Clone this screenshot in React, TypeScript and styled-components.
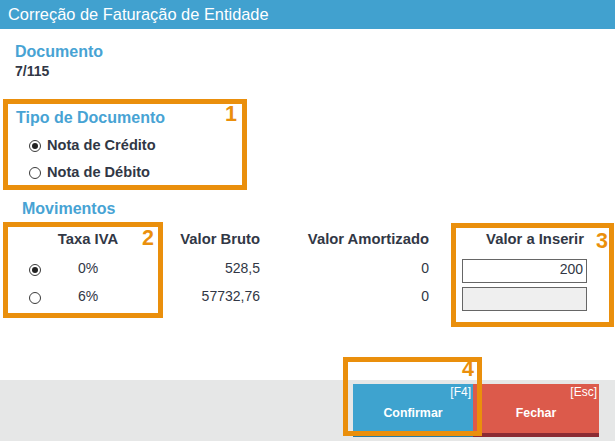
import React from "react";
import styled, { createGlobalStyle } from "styled-components";

const GlobalStyle = createGlobalStyle`
  html, body { margin: 0; padding: 0; background: #ffffff; }
  body { font-family: "Liberation Sans", Arial, sans-serif; }
  * { box-sizing: border-box; }
`;

const ORANGE = "#ea8f0c";
const BLUE = "#41a1cf";
const LABEL = "#47a3d4";
const TEXT = "#313745";

const Page = styled.div`
  position: relative;
  width: 615px;
  height: 441px;
  display: flex;
  flex-direction: column;
  overflow: hidden;
  color: ${TEXT};
`;

const TitleBar = styled.div`
  height: 29px;
  flex: none;
  background: ${BLUE};
  color: #ffffff;
  font-size: 16.4px;
  line-height: 29px;
  padding-left: 8px;
  white-space: nowrap;
`;

const Content = styled.div`
  flex: 1;
  display: flex;
  flex-direction: column;
  padding-top: 13px;
`;

const SectionLabel = styled.div<{ $indent: number; $gap?: number }>`
  font-size: 16px;
  font-weight: bold;
  color: ${LABEL};
  line-height: 20px;
  padding-left: ${(p) => p.$indent}px;
  margin-top: ${(p) => p.$gap ?? 0}px;
`;

const DocValue = styled.div`
  font-size: 14px;
  font-weight: bold;
  line-height: 18px;
  padding-left: 15px;
`;

const OptionList = styled.div`
  display: flex;
  flex-direction: column;
  margin-top: 3px;
  padding-left: 29px;
`;

const Option = styled.label`
  display: flex;
  align-items: center;
  gap: 6px;
  height: 27px;
  font-size: 14.6px;
  font-weight: bold;
`;

const Radio = styled.span<{ $checked?: boolean }>`
  position: relative;
  flex: none;
  width: 12px;
  height: 12px;
  margin-top: 3px;
  border-radius: 50%;
  border: 1px solid #3a3a3a;
  background: #ffffff;
  &::after {
    content: "";
    display: ${(p) => (p.$checked ? "block" : "none")};
    position: absolute;
    left: 2px;
    top: 2px;
    width: 6px;
    height: 6px;
    border-radius: 50%;
    background: #222222;
  }
`;

const Table = styled.div`
  display: grid;
  grid-template-columns: 28px 76px 134px 169px 33px 125px;
  grid-auto-rows: 28px;
  margin-top: 10px;
  margin-left: 22px;
`;

const HeadCell = styled.div<{ $align: "left" | "center" | "right"; $pad?: number }>`
  font-size: 14.8px;
  font-weight: bold;
  line-height: 20px;
  padding-bottom: 8px;
  text-align: ${(p) => p.$align};
  padding-right: ${(p) => p.$pad ?? 0}px;
  white-space: nowrap;
`;

const Cell = styled.div<{ $align: "left" | "center" | "right" }>`
  font-size: 14px;
  line-height: 23px;
  padding-bottom: 5px;
  text-align: ${(p) => p.$align};
  white-space: nowrap;
`;

const RadioCell = styled.div`
  display: flex;
  align-items: center;
  padding-left: 7px;
  padding-bottom: 6px;
`;

const ValueInput = styled.input<{ $disabled?: boolean }>`
  width: 125px;
  height: 24px;
  margin-top: 2px;
  border: 1px solid #666666;
  border-radius: 0;
  background: ${(p) => (p.$disabled ? "#efefef" : "#ffffff")};
  font-family: "Liberation Sans", Arial, sans-serif;
  font-size: 14px;
  color: ${TEXT};
  text-align: right;
  padding: 0 3px 5px 3px;
  outline: none;
`;

const Footer = styled.div`
  flex: none;
  height: 61px;
  background: #e6e7e7;
  display: flex;
  justify-content: flex-end;
  align-items: flex-start;
  padding: 4px 16px 0 0;
`;

const ActionButton = styled.button<{ $bg: string; $edge: string; $w: number }>`
  position: relative;
  width: ${(p) => p.$w}px;
  height: 53px;
  border: none;
  border-bottom: 4px solid ${(p) => p.$edge};
  background: ${(p) => p.$bg};
  color: #ffffff;
  font-family: "Liberation Sans", Arial, sans-serif;
  font-size: 12.4px;
  font-weight: bold;
  padding: 9px 0 0 0;
  cursor: pointer;
`;

const Shortcut = styled.span`
  position: absolute;
  top: 1px;
  right: 2px;
  font-size: 12px;
  font-weight: normal;
  color: #ffffff;
`;

const Annotation = styled.div`
  position: absolute;
  border: 5px solid ${ORANGE};
  pointer-events: none;
`;

const Marker = styled.span`
  position: absolute;
  font-size: 21.5px;
  font-weight: bold;
  line-height: 1;
  color: ${ORANGE};
`;

type Box = { left: number; top: number; width: number; height: number; num: string; nt: number; nr: number };

const boxes: Box[] = [
  { left: 3, top: 99, width: 244, height: 91, num: "1", nt: 0, nr: 5 },
  { left: 3, top: 222, width: 160, height: 96, num: "2", nt: 1, nr: 4 },
  { left: 451, top: 223, width: 163, height: 104, num: "3", nt: 3, nr: 1 },
  { left: 343, top: 357, width: 139, height: 79, num: "4", nt: -3, nr: 3 },
];

const rows = [
  { checked: true, rate: "0%", gross: "528,5", amort: "0", value: "200", disabled: false },
  { checked: false, rate: "6%", gross: "57732,76", amort: "0", value: "", disabled: true },
];

export default function App() {
  return (
    <>
      <GlobalStyle />
      <Page>
        <TitleBar>Correção de Faturação de Entidade</TitleBar>
        <Content>
          <SectionLabel $indent={15}>Documento</SectionLabel>
          <DocValue>7/115</DocValue>

          <SectionLabel $indent={16} $gap={28}>Tipo de Documento</SectionLabel>
          <OptionList>
            <Option>
              <Radio $checked />
              Nota de Crédito
            </Option>
            <Option>
              <Radio />
              Nota de Débito
            </Option>
          </OptionList>

          <SectionLabel $indent={22} $gap={14}>Movimentos</SectionLabel>
          <Table>
            <div />
            <HeadCell $align="center">Taxa IVA</HeadCell>
            <HeadCell $align="right">Valor Bruto</HeadCell>
            <HeadCell $align="right">Valor Amortizado</HeadCell>
            <div />
            <HeadCell $align="right" $pad={3}>Valor a Inserir</HeadCell>
            {rows.map((r, i) => (
              <React.Fragment key={i}>
                <RadioCell>
                  <Radio $checked={r.checked} />
                </RadioCell>
                <Cell $align="center">{r.rate}</Cell>
                <Cell $align="right">{r.gross}</Cell>
                <Cell $align="right">{r.amort}</Cell>
                <div />
                <div>
                  <ValueInput $disabled={r.disabled} disabled={r.disabled} defaultValue={r.value} />
                </div>
              </React.Fragment>
            ))}
          </Table>
        </Content>
        <Footer>
          <ActionButton $bg="#3ea3cf" $edge="#2a7ca3" $w={120}>
            <Shortcut>[F4]</Shortcut>
            Confirmar
          </ActionButton>
          <ActionButton $bg="#dc5a4b" $edge="#8b2b33" $w={126}>
            <Shortcut>[Esc]</Shortcut>
            Fechar
          </ActionButton>
        </Footer>
        {boxes.map((b) => (
          <Annotation
            key={b.num}
            style={{ left: b.left, top: b.top, width: b.width, height: b.height }}
          >
            <Marker style={{ top: b.nt, right: b.nr }}>{b.num}</Marker>
          </Annotation>
        ))}
      </Page>
    </>
  );
}
